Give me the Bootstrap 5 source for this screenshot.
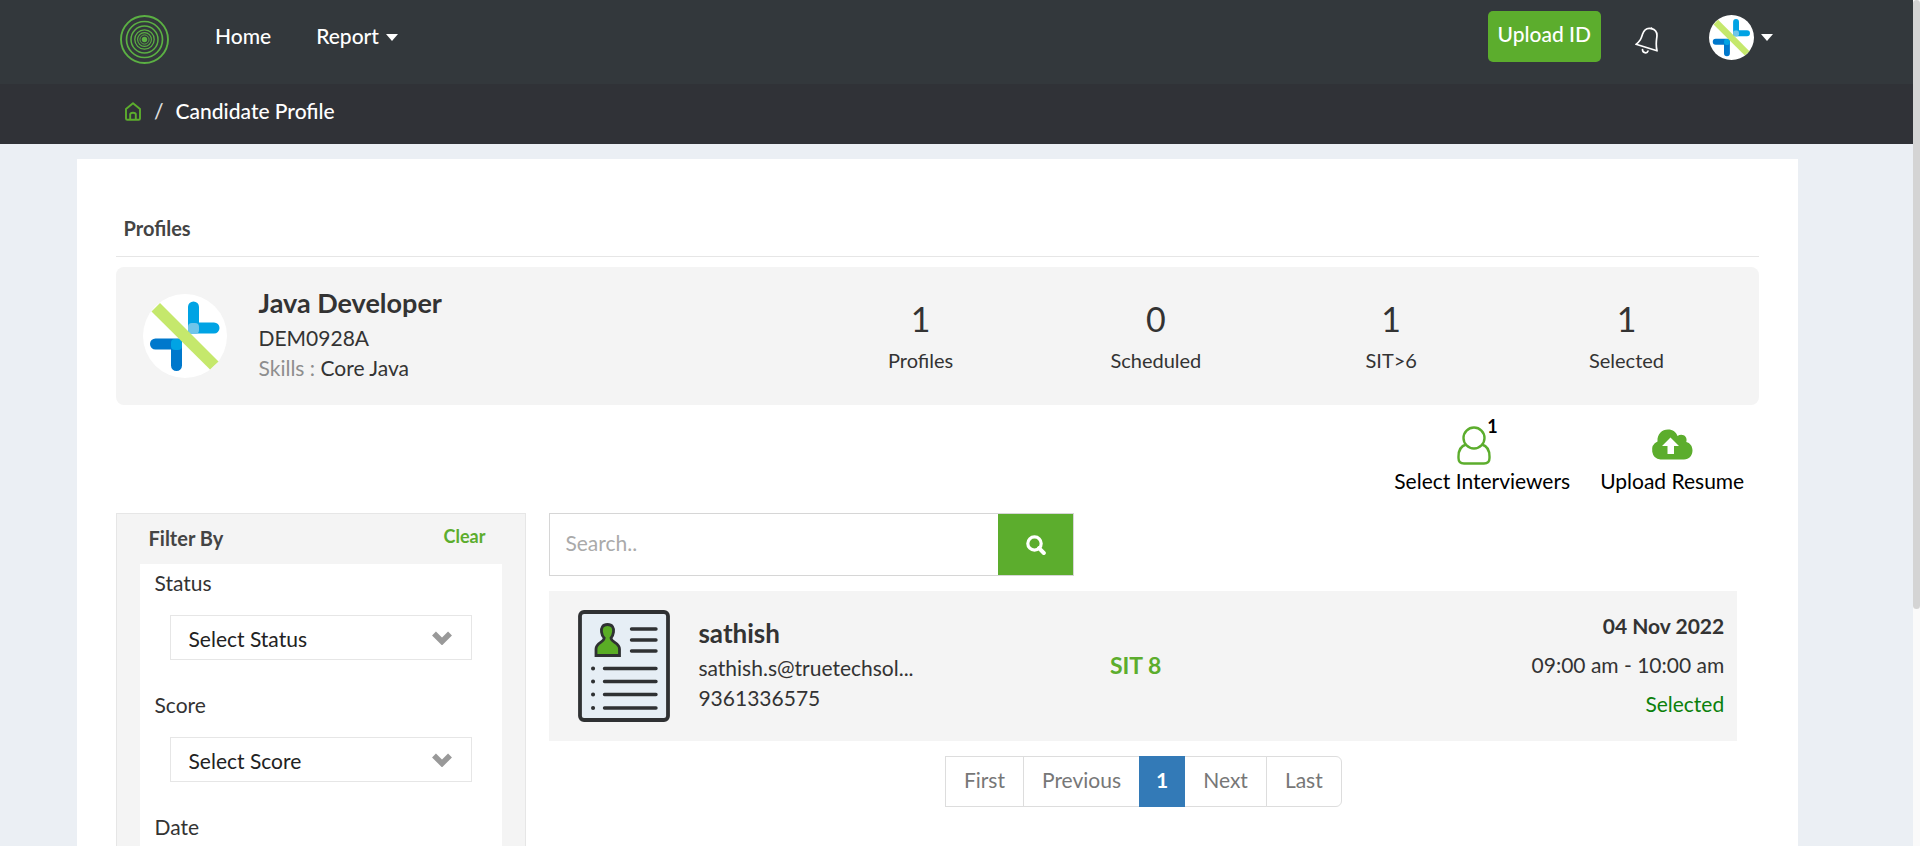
<!DOCTYPE html>
<html lang="en">
<head>
<meta charset="utf-8">
<meta name="viewport" content="width=device-width, initial-scale=1">
<title>Candidate Profile</title>
<link href="https://cdn.jsdelivr.net/npm/bootstrap@5.3.0/dist/css/bootstrap.min.css" rel="stylesheet">
<style>
:root { --brand: #5cad2d; --ink: #333; --soft: #f4f4f4; --line: #e6e6e6; }
body { font-family: Lato, "Open Sans", sans-serif; font-size: 21px; line-height: 30px; color: var(--ink); background: #ebeff4; }
a { color: inherit; text-decoration: none; }
svg { display: block; flex-shrink: 0; }
.brand-text { color: var(--brand); }
.bg-soft { background: var(--soft); }
.view { min-width: 0; }

/* window scroll rail */
.rail { width: 7px; background: #fafafa; }
.rail-thumb { height: 72%; background: #d4d4d4; border-radius: 4px; }

/* top bars */
.topbar { background: #33383c; height: 84px; padding: 11px 140px 0 120px; color: #fff; font-weight: 500; }
.topbar .menu { gap: 45px; margin-left: 46px; padding-top: 10px; }
.topbar .dropdown-toggle::after { margin-left: 7px; vertical-align: 3px; border-width: 7px 6px 0; }
.btn-brand { background: var(--brand); color: #fff; font-size: 21px; font-weight: 500; line-height: 30px; --bs-btn-hover-bg: #4f9926; --bs-btn-hover-color: #fff; }
.btn-upload { padding: 8px 10px 13px; border: 0; border-radius: 5px; }
.crumbs { background: #303237; height: 60px; padding: 0 124px; color: #fff; font-weight: 500; }
.crumbs .breadcrumb { --bs-breadcrumb-divider-color: #ddd; --bs-breadcrumb-item-active-color: #fff; --bs-breadcrumb-item-padding-x: 12px; padding-bottom: 6px; }

/* main sheet */
.sheet { width: 90%; margin: 15px 0 0 4%; padding: 54px 39px 0; }
.sheet-title { font-size: 20px; font-weight: 700; line-height: 30px; padding: 0 8px 13px; border-bottom: 1px solid var(--line); color: #444; }
.job { border-radius: 8px; padding: 15px; height: 138px; margin-top: 10px; }
.job-info { padding: 0 0 4px 4px; }
.job-name { font-size: 27px; font-weight: 700; line-height: 36px; margin-bottom: 2px; }
.skills-label { color: #8e8e8e; }
.stat-num { font-size: 34px; line-height: 44px; margin-bottom: 4px; }
.stat-label { font-size: 20px; line-height: 30px; }
.actions { height: 108px; padding: 19px 15px 0; gap: 30px; color: #000; }
.actions .count { left: 100%; top: -10px; margin-left: -4px; font-size: 18px; line-height: 24px; font-weight: 700; }

/* filter */
.filter { border: 1px solid var(--line); border-bottom: 0; width: 25%; padding: 9px 23px 0; }
.filter-head { padding: 0 17px 11px 9px; }
.filter-head .title { font-size: 20px; font-weight: 700; color: #444; }
.filter-head a { font-size: 18px; font-weight: 700; line-height: 26px; }
.filter-body { padding: 4px 30px 0 15px; height: 290px; }
.filter-body .form-select {
  width: calc(100% - 15px); margin: 17px 0 30px 15px; height: 45px; padding: 2px 50px 0 18px; font-size: 21px; line-height: 30px;
  border: 1px solid var(--line); border-radius: 0; color: #222;
  background: #fff url("data:image/svg+xml,%3Csvg xmlns='http://www.w3.org/2000/svg' viewBox='0 0 20 14'%3E%3Cpath d='M2 2.5 10 10.500l8-8' fill='none' stroke='%23999' stroke-width='5.500'/%3E%3C/svg%3E") no-repeat right 19px center / 20px 14px;
}

/* results */
.results { padding: 0 22px 0 23px; min-width: 0; }
.search { width: 525px; border: 1px solid #d6d6d6; height: 63px; }
.search .form-control { border: 0; border-radius: 0; padding: 0 15px 3px; font-size: 21px; }
.search .form-control::placeholder { color: #aaa; }
.search .btn { width: 75px; border: 0; border-radius: 0; }
.person { height: 150px; margin-top: 15px; padding: 0 13px 0 29px; }
.person-info { padding: 0 0 4px 4px; }
.person-name { font-size: 26px; font-weight: 700; line-height: 36px; margin-bottom: 2px; }
.sit { font-size: 23px; font-weight: 700; margin-left: 129px; padding-bottom: 2px; }
.when { line-height: 39px; padding-bottom: 4px; }
.when strong { font-weight: 700; }
.state-ok { color: #0b800b; }
.pagination { --bs-pagination-color: #777; --bs-pagination-font-size: 21px; --bs-pagination-border-color: #ddd; --bs-pagination-active-bg: #337ab7; --bs-pagination-active-border-color: #337ab7; margin: 15px 0 0; line-height: 30px; }
.pagination .page-link { padding: 8px 18px 11px; }
.pagination .page-item:first-child .page-link { border-radius: 0; }
.pagination .active .page-link { font-weight: 700; padding-left: 16px; padding-right: 16px; }
</style>
</head>
<body class="vh-100 overflow-hidden d-flex">
<svg class="d-none" aria-hidden="true">
  <symbol id="company" viewBox="0 0 84 84">
    <circle cx="42" cy="42" r="42" fill="#fff"/>
    <g fill="none" stroke-width="11" stroke-linecap="round">
      <path d="M50.500 13v21H71" stroke="#00a3e4"/>
      <path d="M12.500 50H33.500V71.500" stroke="#0078cc"/>
    </g>
    <rect x="45" y="29" width="11" height="11" rx="4" fill="#70c5ea"/>
    <rect x="28" y="45" width="11" height="11" rx="4" fill="#00a3e4"/>
    <path d="M17 9 75.500 67.500 67 75.500 8.500 17.500z" fill="#c5e86c"/>
  </symbol>
</svg>
<div class="view flex-grow-1 overflow-hidden">
  <header>
    <nav class="topbar d-flex align-items-start">
      <a href="#" class="mt-1" aria-label="Start page">
        <svg width="49" height="49" viewBox="0 0 49 49" fill="none" stroke="#5bb043">
          <circle cx="24.500" cy="24.500" r="23.500" stroke-width="1.900"/><circle cx="24.500" cy="24.500" r="18" stroke-width="1.700"/>
          <circle cx="24.500" cy="24.500" r="13.500" stroke-width="1.500"/><circle cx="24.500" cy="24.500" r="9.700" stroke-width="1.300"/>
          <circle cx="24.500" cy="24.500" r="6.900" stroke-width="1.100"/><circle cx="24.500" cy="24.500" r="4.600" stroke-width=".9"/>
          <circle cx="24.500" cy="24.500" r="2.700" fill="#5bb043" stroke="none"/>
        </svg>
      </a>
      <div class="menu d-flex">
        <a href="#">Home</a>
        <a href="#" class="dropdown-toggle">Report</a>
      </div>
      <button type="button" class="btn btn-brand btn-upload ms-auto">Upload ID</button>
      <a href="#" class="ms-4 ps-2 pt-3" aria-label="Notifications">
        <svg width="28" height="28" viewBox="0 1 28 28" fill="none" stroke="#fff" stroke-width="1.700" stroke-linejoin="round" stroke-linecap="round">
          <path d="M3 17.500C7.500 14 8 12 9.500 7.500 11 3 14.500.8 18.500 1.800 22.500 2.800 24.500 6 23.800 10.500 23.200 15 22.600 18 24 24z" transform="translate(0 .8)"/>
          <path d="M18.500 2.500V2M9.500 23.500C9.500 27 14 28 15 25"/>
        </svg>
      </a>
      <a href="#" class="dropdown-toggle d-flex align-items-center ms-5 mt-1" aria-label="Account">
        <svg width="45" height="45"><use href="#company"/></svg>
      </a>
    </nav>
    <nav class="crumbs d-flex align-items-center" aria-label="breadcrumb">
      <ol class="breadcrumb mb-0">
        <li class="breadcrumb-item d-flex align-items-center"><a href="#" aria-label="Home">
          <svg width="18" height="19" viewBox="0 0 18 19" fill="none" stroke="#5cad2d" stroke-width="1.900" stroke-linejoin="round"><path d="M2 7 9 1.200 16 7V16.500Q16 17.800 14.700 17.800H3.300Q2 17.800 2 16.500zM6.200 17.500V12.500Q6.200 10.800 9 10.800T11.800 12.500V17.500"/></svg></a></li>
        <li class="breadcrumb-item active" aria-current="page">Candidate Profile</li>
      </ol>
    </nav>
  </header>

  <main class="sheet bg-white">
    <h1 class="sheet-title mb-0">Profiles</h1>

    <section class="job bg-soft d-flex align-items-center">
      <div class="col-5 d-flex align-items-center">
        <svg class="ms-2 me-4" width="92" height="84" viewBox="-4 0 92 84"><use href="#company" width="84" height="84"/></svg>
        <div class="job-info">
          <h2 class="job-name">Java Developer</h2>
          <div>DEM0928A</div>
          <div><span class="skills-label">Skills :</span> Core Java</div>
        </div>
      </div>
      <div class="col-7 d-flex text-center">
        <div class="col-3"><div class="stat-num">1</div><div class="stat-label">Profiles</div></div>
        <div class="col-3"><div class="stat-num">0</div><div class="stat-label">Scheduled</div></div>
        <div class="col-3"><div class="stat-num">1</div><div class="stat-label">SIT&gt;6</div></div>
        <div class="col-3"><div class="stat-num">1</div><div class="stat-label">Selected</div></div>
      </div>
    </section>

    <div class="actions d-flex justify-content-end text-center">
      <a href="#" class="d-flex flex-column align-items-center">
        <span class="position-relative me-3">
          <svg width="34" height="42" viewBox="0 -1 34 42" fill="none" stroke="#5cad2d" stroke-width="2.400"><circle cx="17" cy="13" r="10.500"/><path d="M9 19.500C4 21 1.500 26 1.500 31.500V33Q1.500 38.500 7 38.500H27Q32.500 38.500 32.500 33V31.500C32.500 26 30 21 25 19.500"/></svg>
          <span class="count position-absolute">1</span>
        </span>
        <span>Select Interviewers</span>
      </a>
      <a href="#" class="d-flex flex-column align-items-center">
        <svg width="42" height="42" viewBox="0 -1 42 42"><path d="M9.500 34.500A9.500 9.500 0 0 1 6.500 16.500C6 9 11 4.500 17 4.500 22 4.500 25 7 26.500 11 31 8 37 11 35.300 17 39 18 41.500 21 41.500 25.500 41.500 30.500 38 34.500 33 34.500z" fill="#5cad2d"/><path d="M19.500 12.500 28 21H23V29H16.500V21H11z" fill="#fff"/></svg>
        <span>Upload Resume</span>
      </a>
    </div>

    <div class="d-flex">
      <aside class="filter bg-soft flex-shrink-0">
        <div class="filter-head d-flex justify-content-between">
          <span class="title">Filter By</span>
          <a href="#" class="brand-text">Clear</a>
        </div>
        <form class="filter-body bg-white">
          <label class="d-block" for="status">Status</label>
          <select id="status" class="form-select"><option>Select Status</option></select>
          <label class="d-block" for="score">Score</label>
          <select id="score" class="form-select"><option>Select Score</option></select>
          <div>Date</div>
        </form>
      </aside>

      <section class="results flex-grow-1">
        <form class="search d-flex mw-100">
          <input type="text" class="form-control" placeholder="Search.." aria-label="Search">
          <button type="button" class="btn btn-brand d-flex align-items-center justify-content-center flex-shrink-0" aria-label="Search">
            <svg width="20" height="20" viewBox="0 0 20 20" fill="none" stroke="#fff" stroke-width="3.200"><circle cx="8.500" cy="8.500" r="6.700"/><path d="m13 13.200 4.800 4.800" stroke-width="4" stroke-linecap="round"/></svg>
          </button>
        </form>

        <article class="person bg-soft d-flex align-items-center">
          <svg width="92" height="112" viewBox="0 0 92 112" fill="none" stroke="#2f3133" stroke-linecap="round">
            <rect x="2" y="2" width="88" height="108" rx="4" fill="#e6eef5" stroke-width="3.800"/>
            <path d="M29.500 14.500C34.500 14.500 36 18 35.500 22 35 25.500 34 27 33 28 33.200 32.500 41.500 32.500 41.500 39V45.500H18V39C18 32.500 26 32.500 26.200 28 25 27 24 25.500 23.500 22 23 18 24.500 14.500 29.500 14.500z" fill="#5aad25" stroke-width="2.800"/>
            <path d="M53.500 19H78M53.500 30H78M53.500 41H78M26.500 58.500H78M26.500 71.500H78M26.500 84.500H78M26.500 98H78" stroke-width="3.400"/>
            <path d="M15 58.500h.1M15 71.500h.1M15 84.500h.1M15 98h.1" stroke-width="4"/>
          </svg>
          <div class="person-info col-3 ms-4">
            <h3 class="person-name">sathish</h3>
            <div>sathish.s@truetechsol...</div>
            <div>9361336575</div>
          </div>
          <div class="sit brand-text">SIT 8</div>
          <div class="when ms-auto text-end">
            <strong>04 Nov 2022</strong>
            <div>09:00 am - 10:00 am</div>
            <div class="state-ok">Selected</div>
          </div>
        </article>

        <nav aria-label="Result pages">
          <ul class="pagination justify-content-center">
            <li class="page-item"><a class="page-link" href="#">First</a></li>
            <li class="page-item"><a class="page-link" href="#">Previous</a></li>
            <li class="page-item active" aria-current="page"><a class="page-link" href="#">1</a></li>
            <li class="page-item"><a class="page-link" href="#">Next</a></li>
            <li class="page-item"><a class="page-link" href="#">Last</a></li>
          </ul>
        </nav>
      </section>
    </div>
  </main>
</div>
<div class="rail flex-shrink-0" aria-hidden="true"><div class="rail-thumb"></div></div>
<script src="https://cdn.jsdelivr.net/npm/bootstrap@5.3.0/dist/js/bootstrap.bundle.min.js"></script>
</body>
</html>
